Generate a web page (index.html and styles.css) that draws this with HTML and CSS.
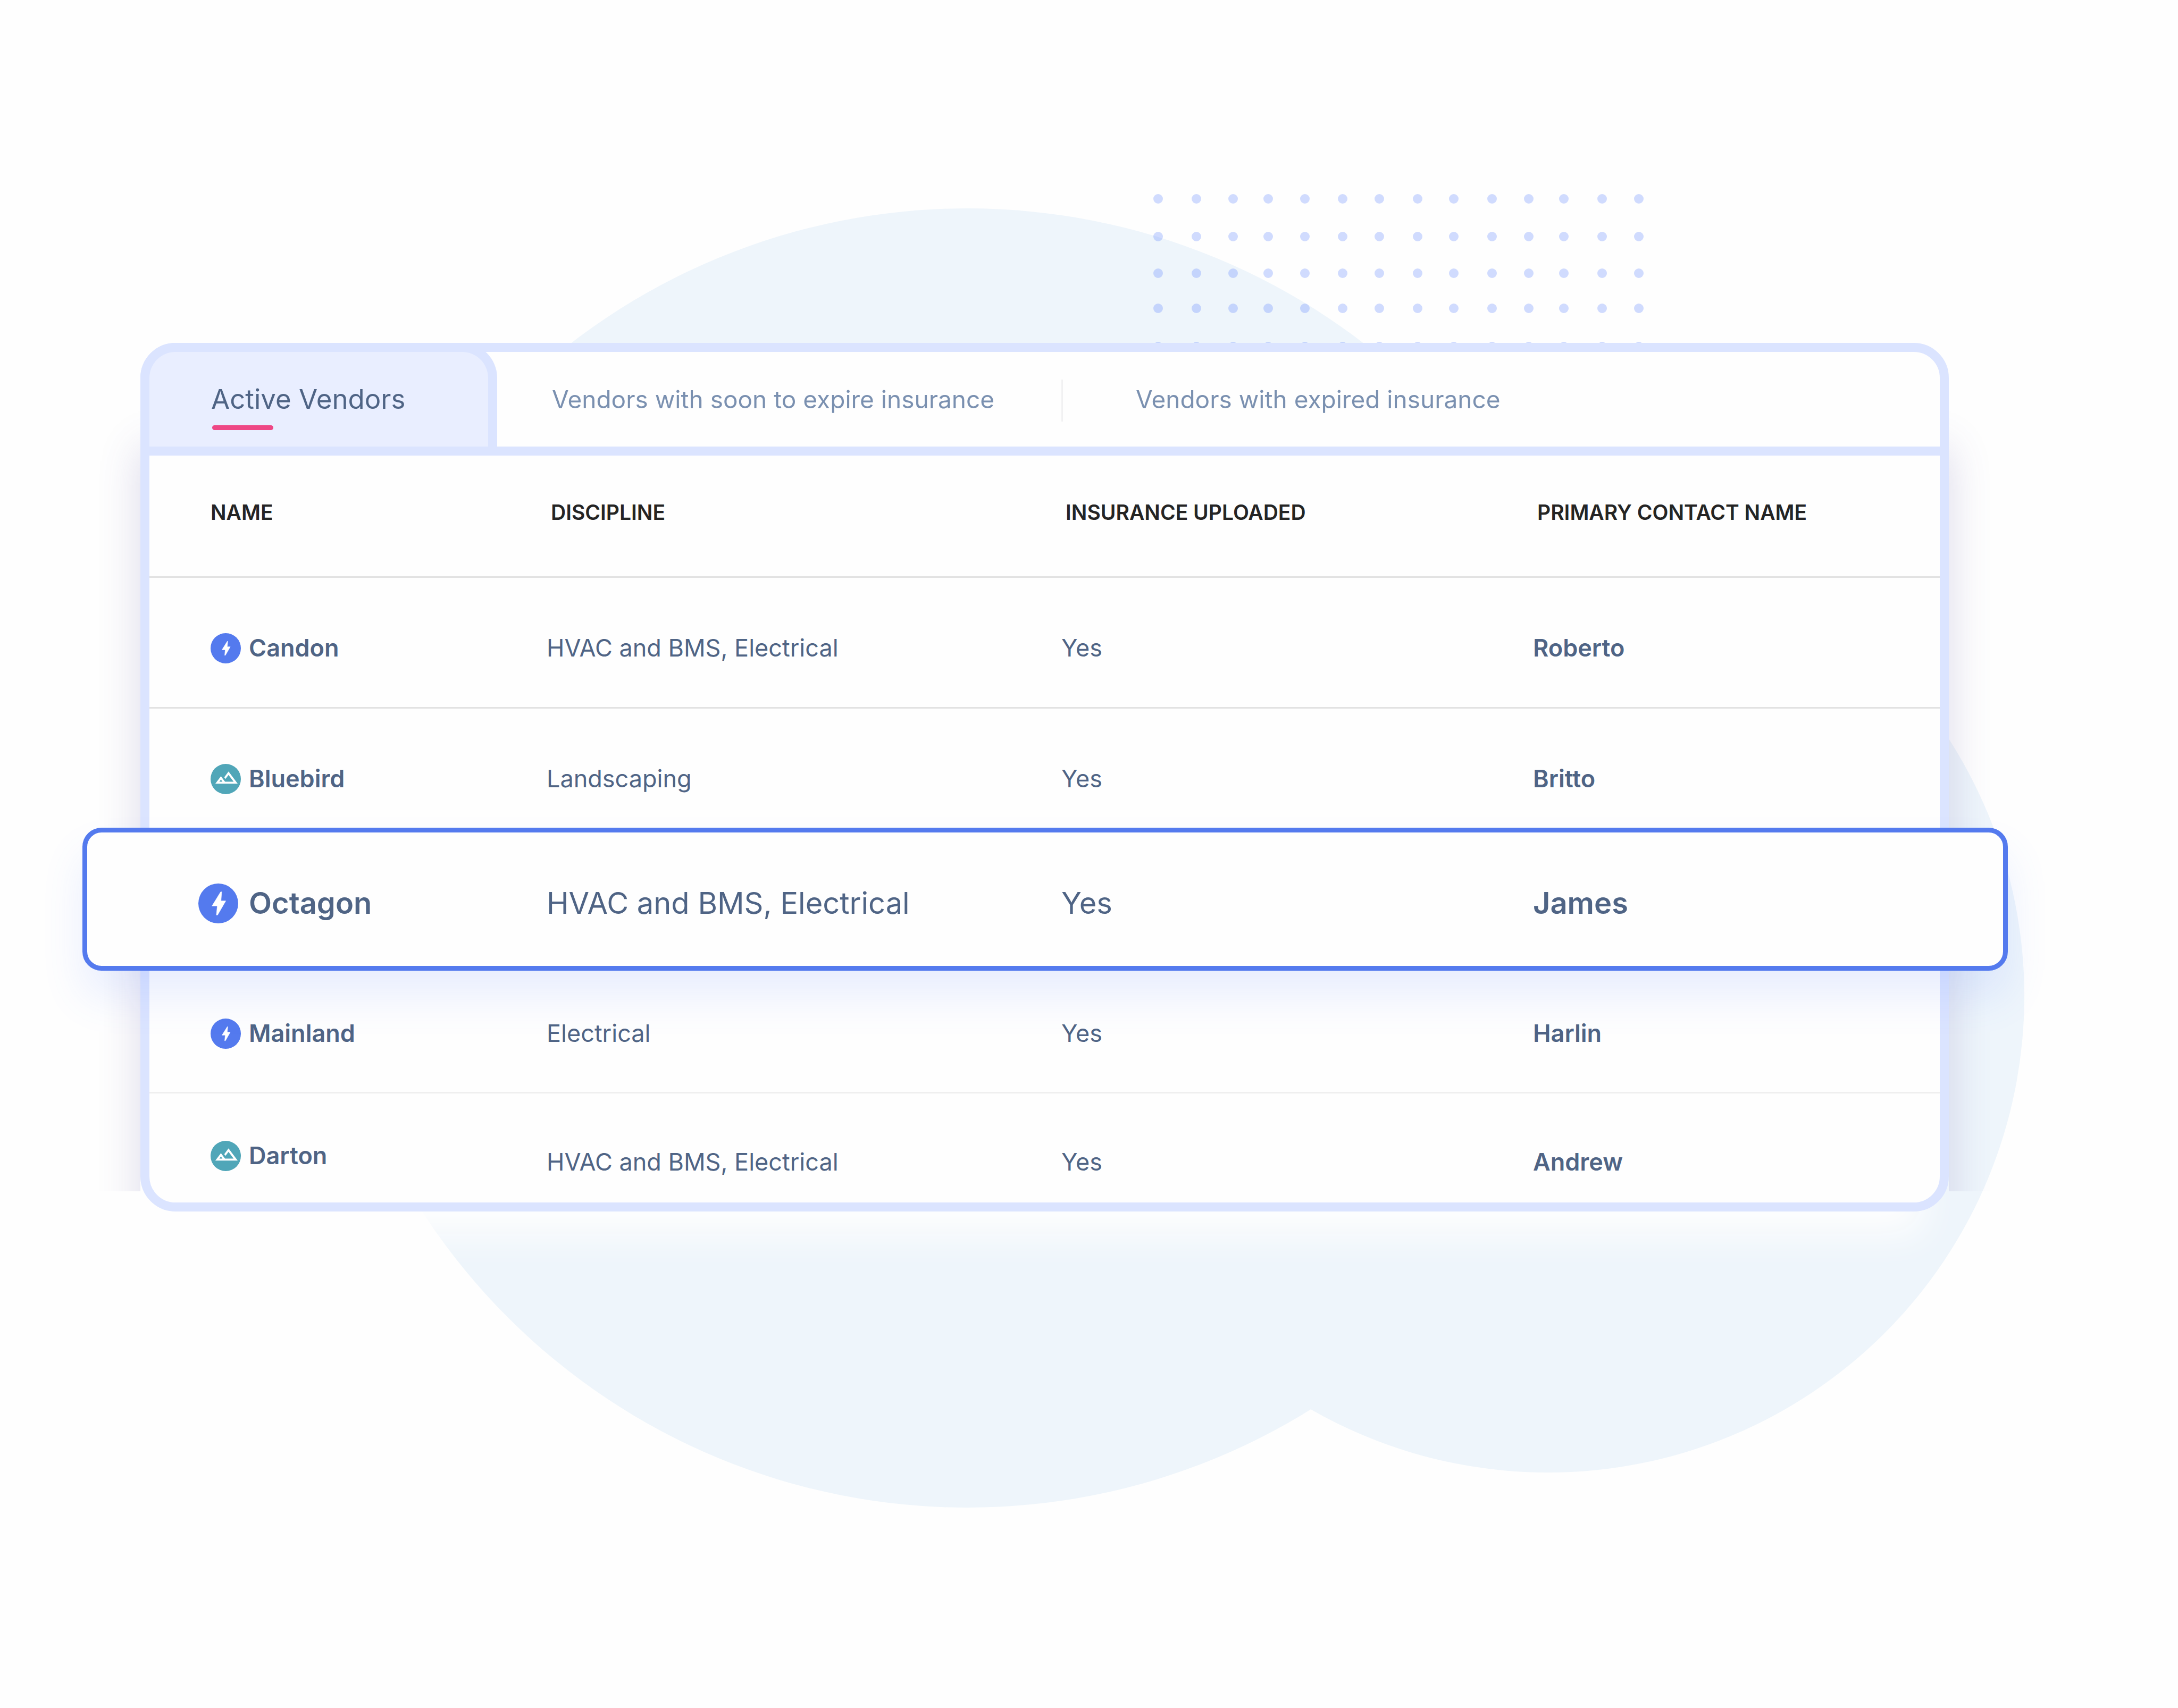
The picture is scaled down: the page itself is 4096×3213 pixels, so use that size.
FILE: index.html
```html
<!DOCTYPE html>
<html lang="en">
<head>
<meta charset="utf-8">
<meta name="viewport" content="width=device-width, initial-scale=1">
<title>Active Vendors</title>
<link rel="stylesheet" href="styles.css">
</head>
<body>
<main class="stage">
  <svg class="backdrop" viewBox="0 0 4096 3213" aria-hidden="true">
    <defs>
      <g id="dot-row">
        <circle cx="2178" r="9"/><circle cx="2250" r="9"/><circle cx="2319" r="9"/><circle cx="2385" r="9"/><circle cx="2454" r="9"/><circle cx="2525" r="9"/><circle cx="2594" r="9"/><circle cx="2666" r="9"/><circle cx="2734" r="9"/><circle cx="2806" r="9"/><circle cx="2875" r="9"/><circle cx="2941" r="9"/><circle cx="3013" r="9"/><circle cx="3082" r="9"/>
      </g>
      <symbol id="icon-bolt" viewBox="0 0 180 180">
        <circle cx="90" cy="90" r="90" fill="#547aee"/>
        <path d="M99 49 102 48 99 81H117L88 132 84 132 87 99H68Z" fill="#fff" stroke="#fff" stroke-width="2" stroke-linejoin="round"/>
      </symbol>
      <symbol id="icon-bolt-large" viewBox="0 0 234 234">
        <circle cx="117" cy="117" r="117" fill="#547aee"/>
        <path d="M131 49 137 49 133 102H161L113 185 106 185 111 132H80Z" fill="#fff" stroke="#fff" stroke-width="2" stroke-linejoin="round"/>
      </symbol>
      <symbol id="icon-terrain" viewBox="0 0 180 180">
        <circle cx="90" cy="90" r="90" fill="#50a6b8"/>
        <path transform="translate(22 9) scale(6.05)" d="M14 6l-4.22 5.63 1.25 1.67L14 9.33 19 16h-8.46l-4.01-5.37L1 18h22L14 6zM5 16l1.52-2.03L8.04 16H5z" fill="#fff"/>
      </symbol>
    </defs>
    <g fill="#eef5fb">
      <circle cx="1819" cy="1614" r="1222"/>
      <circle cx="2911" cy="1874" r="896"/>
    </g>
    <g fill="#547cff" opacity=".27">
      <use href="#dot-row" y="374"/>
      <use href="#dot-row" y="445"/>
      <use href="#dot-row" y="514"/>
      <use href="#dot-row" y="580"/>
      <use href="#dot-row" y="652"/>
    </g>
  </svg>

  <section class="card">
    <nav class="tabs" role="tablist" aria-label="Vendor lists">
      <button class="tab tab-active" type="button" role="tab" aria-selected="true">Active Vendors</button>
      <button class="tab tab-soon" type="button" role="tab" aria-selected="false">Vendors with soon to expire insurance</button>
      <button class="tab tab-expired" type="button" role="tab" aria-selected="false">Vendors with expired insurance</button>
    </nav>
    <table class="vendors">
      <colgroup><col class="col-name"><col class="col-discipline"><col class="col-insurance"><col class="col-contact"></colgroup>
      <thead>
        <tr>
          <th scope="col">NAME</th>
          <th scope="col">DISCIPLINE</th>
          <th scope="col">INSURANCE UPLOADED</th>
          <th scope="col">PRIMARY CONTACT NAME</th>
        </tr>
      </thead>
      <tbody>
        <tr class="row">
          <td><div class="name"><svg class="icon" aria-hidden="true"><use href="#icon-bolt"/></svg>Candon</div></td>
          <td>HVAC and BMS, Electrical</td>
          <td>Yes</td>
          <td class="contact">Roberto</td>
        </tr>
        <tr class="row row-before">
          <td><div class="name"><svg class="icon" aria-hidden="true"><use href="#icon-terrain"/></svg>Bluebird</div></td>
          <td>Landscaping</td>
          <td>Yes</td>
          <td class="contact">Britto</td>
        </tr>
        <tr class="row-featured">
          <td><div class="name"><svg class="icon" aria-hidden="true"><use href="#icon-bolt-large"/></svg>Octagon</div></td>
          <td>HVAC and BMS, Electrical</td>
          <td>Yes</td>
          <td class="contact">James</td>
        </tr>
        <tr class="row-after">
          <td><div class="name"><svg class="icon" aria-hidden="true"><use href="#icon-bolt"/></svg>Mainland</div></td>
          <td>Electrical</td>
          <td>Yes</td>
          <td class="contact">Harlin</td>
        </tr>
        <tr class="row-last">
          <td><div class="name"><svg class="icon" aria-hidden="true"><use href="#icon-terrain"/></svg>Darton</div></td>
          <td>HVAC and BMS, Electrical</td>
          <td>Yes</td>
          <td class="contact">Andrew</td>
        </tr>
      </tbody>
    </table>
  </section>
</main>
</body>
</html>
```
FILE: styles.css
```css
* {
  box-sizing: border-box;
}

body {
  margin: 0;
  background: #fefefe;
  color: #4f6485;
  font-family: Inter, "Liberation Sans", sans-serif;
}

.stage {
  position: relative;
  isolation: isolate;
  min-height: 100vh;
  padding: 645px 431px 0 264px;
}

.backdrop {
  position: absolute;
  top: 0;
  left: 0;
  z-index: -2;
  width: 100%;
}

/* Card */
.card {
  position: relative;
  border: 17px solid #dbe4ff;
  border-radius: 66px;
  background: #fefefe;
}

/* Light glow under the card */
.card::after {
  content: "";
  position: absolute;
  inset: -17px;
  z-index: -2;
  border-radius: 66px;
  box-shadow: 0 92px 70px -50px #fefefe;
}

/* Side shadow, cut off near the bottom edge */
.card::before {
  content: "";
  position: absolute;
  inset: 60px -17px 21px;
  z-index: -1;
  box-shadow: 0 120px 75px rgba(80, 70, 150, 0.2);
  clip-path: inset(0 -200px);
}

/* Tabs */
.tabs {
  display: flex;
  height: 195px;
  border-bottom: 17px solid #dbe4ff;
}

.tab {
  position: relative;
  flex: none;
  margin: 0;
  padding: 0;
  border: 0;
  background: none;
  color: #7a90b0;
  font: 400 46px/60px Inter, "Liberation Sans", sans-serif;
  text-align: left;
  cursor: pointer;
}

.tab-active {
  width: 671px;
  margin: -17px 0 0 -17px;
  padding: 0 0 0 116px;
  border: 17px solid #dbe4ff;
  border-bottom: 0;
  border-radius: 66px 66px 0 0;
  background: #e9eeff;
  color: #4f6485;
  font-size: 51px;
}

.tab-active::after {
  content: "";
  position: absolute;
  bottom: 31px;
  left: 118px;
  width: 115px;
  height: 9px;
  border-radius: 5px;
  background: #ee4785;
}

.tab-soon {
  width: 1064px;
  padding-left: 103px;
}

.tab-soon::after {
  content: "";
  position: absolute;
  top: 52px;
  right: 0;
  width: 3px;
  height: 79px;
  background: #f1f1f2;
}

.tab-expired {
  padding-left: 137px;
}

/* Table */
.vendors {
  width: 100%;
  table-layout: fixed;
  border-collapse: separate;
  border-spacing: 0;
  font-size: 45px;
  line-height: 60px;
}

.col-name { width: 747px; }
.col-discipline { width: 968px; }
.col-insurance { width: 887px; }

th,
td {
  padding: 0;
  text-align: left;
  vertical-align: top;
  white-space: nowrap;
}

th {
  height: 230px;
  padding: 77px 0 0 8px;
  border-bottom: 3px solid #e2e2e2;
  color: #242424;
  font-size: 39px;
  font-weight: 600;
}

th:first-child,
td:first-child {
  padding-left: 115px;
}

.row td {
  height: 246px;
  padding-top: 102px;
  border-bottom: 3px solid #e2e2e2;
}

.row-before td {
  height: 224px;
  border-bottom: 0;
}

.row-after td {
  height: 231px;
  padding-top: 88px;
  border-bottom: 3px solid #efefef;
}

.row-last td {
  height: 205px;
  padding-top: 99px;
}

.row-last td:first-child {
  padding-top: 87px;
}

.name {
  display: flex;
  align-items: center;
  gap: 15px;
  height: 60px;
  font-weight: 600;
}

.icon {
  flex: none;
  width: 57px;
  height: 57px;
}

.contact {
  font-weight: 600;
}

/* Raised row, wider than the card */
.row-featured {
  position: relative;
  z-index: 1;
  font-size: 56px;
}

.row-featured td:first-child::before {
  content: "";
  position: absolute;
  inset: 0 -128px 0 -126px;
  z-index: -1;
  border: 9px solid #547aee;
  border-radius: 36px;
  background: #fefefe;
  box-shadow: 0 50px 80px rgba(84, 121, 255, 0.12);
}

.row-featured td {
  height: 269px;
  padding-top: 112px;
}

.row-featured td:first-child {
  padding-left: 92px;
}

.row-featured .name {
  gap: 20px;
}

.row-featured .icon {
  width: 75px;
  height: 75px;
}
```
